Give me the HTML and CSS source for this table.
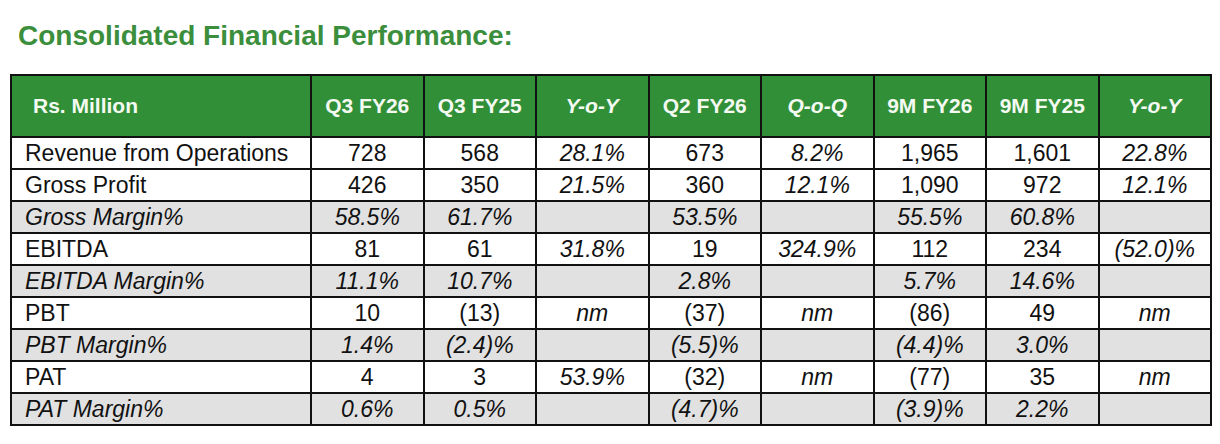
FILE: index.html
```html
<!DOCTYPE html>
<html>
<head>
<meta charset="utf-8">
<link rel="stylesheet" href="styles.css">
</head>
<body>
<div class="page">
  <h1 class="title">Consolidated Financial Performance:</h1>
  <table class="fin">
    <colgroup>
      <col class="c-label">
      <col class="c-num"><col class="c-num"><col class="c-num"><col class="c-num">
      <col class="c-num"><col class="c-num"><col class="c-num"><col class="c-num">
    </colgroup>
    <thead>
      <tr>
        <th class="h-label">Rs. Million</th>
        <th>Q3 FY26</th>
        <th>Q3 FY25</th>
        <th class="it">Y-o-Y</th>
        <th>Q2 FY26</th>
        <th class="it">Q-o-Q</th>
        <th>9M FY26</th>
        <th>9M FY25</th>
        <th class="it">Y-o-Y</th>
      </tr>
    </thead>
    <tbody>
      <tr>
        <td class="label">Revenue from Operations</td>
        <td>728</td><td>568</td><td class="it">28.1%</td><td>673</td><td class="it">8.2%</td><td>1,965</td><td>1,601</td><td class="it">22.8%</td>
      </tr>
      <tr>
        <td class="label">Gross Profit</td>
        <td>426</td><td>350</td><td class="it">21.5%</td><td>360</td><td class="it">12.1%</td><td>1,090</td><td>972</td><td class="it">12.1%</td>
      </tr>
      <tr class="margin">
        <td class="label">Gross Margin%</td>
        <td>58.5%</td><td>61.7%</td><td></td><td>53.5%</td><td></td><td>55.5%</td><td>60.8%</td><td></td>
      </tr>
      <tr>
        <td class="label">EBITDA</td>
        <td>81</td><td>61</td><td class="it">31.8%</td><td>19</td><td class="it">324.9%</td><td>112</td><td>234</td><td class="it">(52.0)%</td>
      </tr>
      <tr class="margin">
        <td class="label">EBITDA Margin%</td>
        <td>11.1%</td><td>10.7%</td><td></td><td>2.8%</td><td></td><td>5.7%</td><td>14.6%</td><td></td>
      </tr>
      <tr>
        <td class="label">PBT</td>
        <td>10</td><td>(13)</td><td class="it">nm</td><td>(37)</td><td class="it">nm</td><td>(86)</td><td>49</td><td class="it">nm</td>
      </tr>
      <tr class="margin">
        <td class="label">PBT Margin%</td>
        <td>1.4%</td><td>(2.4)%</td><td></td><td>(5.5)%</td><td></td><td>(4.4)%</td><td>3.0%</td><td></td>
      </tr>
      <tr>
        <td class="label">PAT</td>
        <td>4</td><td>3</td><td class="it">53.9%</td><td>(32)</td><td class="it">nm</td><td>(77)</td><td>35</td><td class="it">nm</td>
      </tr>
      <tr class="margin">
        <td class="label">PAT Margin%</td>
        <td>0.6%</td><td>0.5%</td><td></td><td>(4.7)%</td><td></td><td>(3.9)%</td><td>2.2%</td><td></td>
      </tr>
    </tbody>
  </table>
</div>
</body>
</html>
```
FILE: styles.css
```css
html, body {
  margin: 0;
  padding: 0;
  background: #ffffff;
}

.page {
  padding: 20px 10px 0 10px;
  font-family: "Liberation Sans", Arial, sans-serif;
  color: #111111;
}

.title {
  margin: 0 0 0 8px;
  font-size: 28px;
  line-height: 32px;
  font-weight: bold;
  color: #3a8e3c;
}

.fin {
  margin-top: 22px;
  width: 1200px;
  table-layout: fixed;
  border-collapse: collapse;
  border: 2px solid #111111;
}

.c-label { width: 300px; }
.c-num { width: 112.5px; }

.fin th {
  height: 60px;
  padding: 0;
  background: #318f37;
  color: #f4faf2;
  font-size: 21px;
  font-weight: bold;
  text-align: center;
  border: 2px solid #111111;
}

.fin th.h-label {
  text-align: left;
  padding-left: 21px;
}

.fin td {
  height: 30px;
  padding: 0;
  font-size: 23px;
  line-height: 30px;
  text-align: center;
  border: 2px solid #111111;
  white-space: nowrap;
}

.fin td.label {
  text-align: left;
  padding-left: 13px;
}

.it {
  font-style: italic;
}

.fin tr.margin td {
  background: #e1e1e1;
  font-style: italic;
}
```
